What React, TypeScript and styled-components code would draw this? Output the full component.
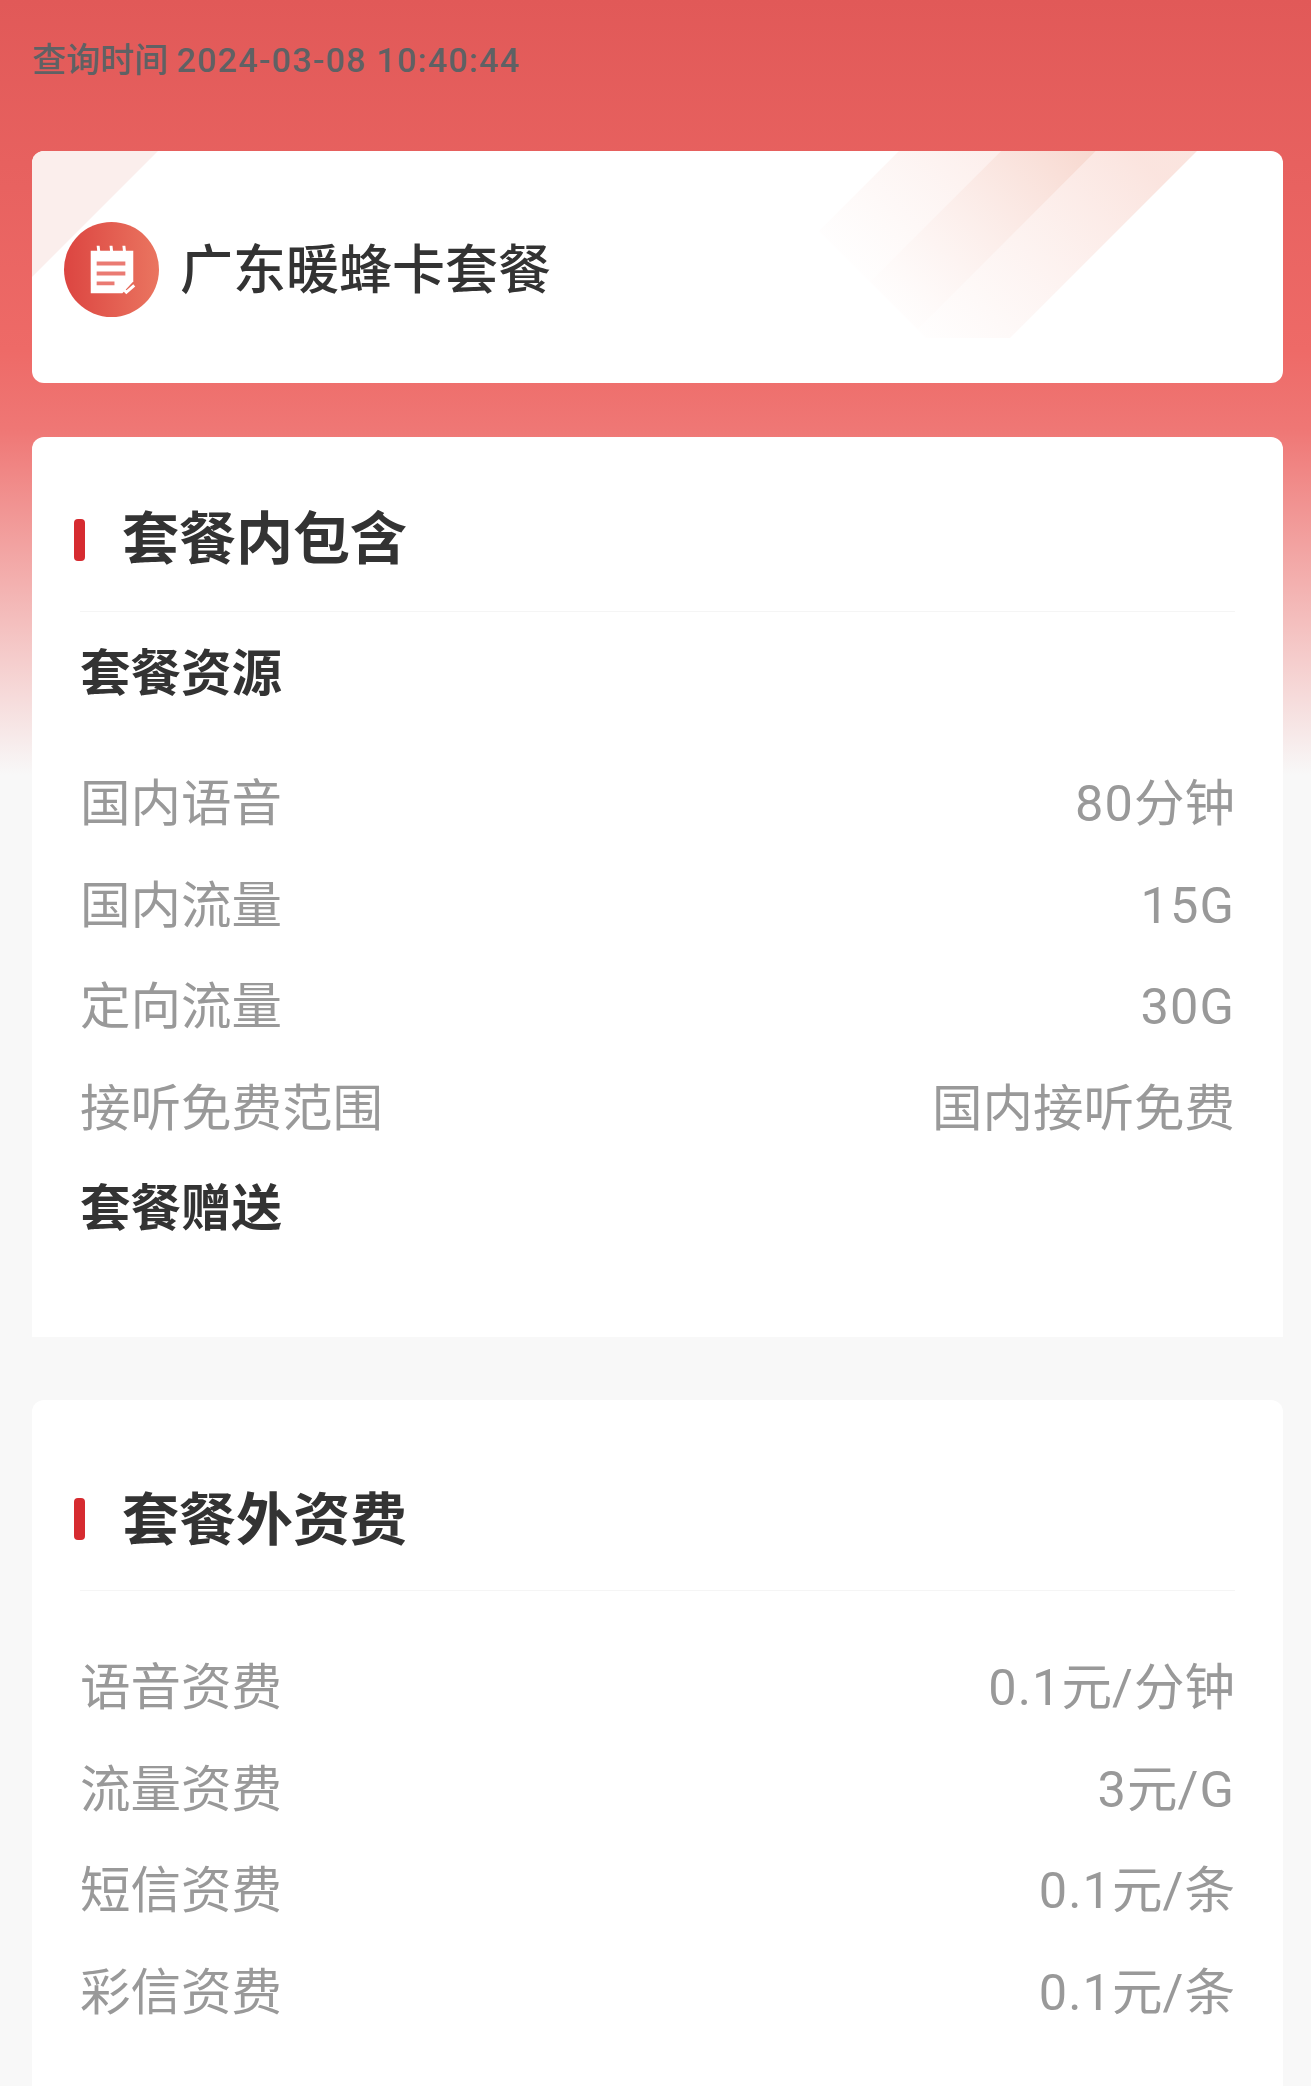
import React from "react";
import styled, { createGlobalStyle } from "styled-components";

const Global = createGlobalStyle`
  html, body { margin: 0; padding: 0; background: #f8f8f8; }
  body { font-family: Roboto, "Noto Sans CJK SC", sans-serif; }
`;

const Page = styled.div`
  width: 1311px;
  height: 2086px;
  overflow: hidden;
  box-sizing: border-box;
  padding: 0 28px 0 32px;
  display: flex;
  flex-direction: column;
  background: linear-gradient(180deg, #e15958 0, #ee6a67 350px, #ef7775 430px, #f8f8f8 775px);
`;

const QueryTime = styled.div`
  flex: none;
  height: 151px;
  padding-top: 38px;
  box-sizing: border-box;
  font-size: 34px;
  line-height: 44px;
  font-weight: 500;
  color: #5f6164;
`;

const Stamp = styled.span`
  letter-spacing: 1.25px;
`;

const Hero = styled.section`
  position: relative;
  flex: none;
  height: 232px;
  border-radius: 12px;
  background: #fff;
  overflow: hidden;
  display: flex;
  align-items: center;
  gap: 21px;
  padding-left: 32px;
  margin-bottom: 54px;
`;

const HeroArt = styled.svg`
  position: absolute;
  inset: 0;
  width: 100%;
  height: 100%;
`;

const HeroIcon = styled.svg`
  position: relative;
  width: 95px;
  height: 95px;
  flex: none;
  margin-top: 5px;
`;

const HeroTitle = styled.h1`
  position: relative;
  margin: 8px 0 0;
  font-size: 53px;
  font-weight: 500;
  color: #333;
  line-height: 72px;
`;

const Card = styled.section<{ $height?: number; $gap?: boolean }>`
  background: #fff;
  border-radius: 12px 12px 0 0;
  flex: ${(p) => (p.$height ? `0 0 ${p.$height}px` : "1 0 auto")};
  margin-bottom: ${(p) => (p.$gap ? "63px" : "0")};
  padding: 0 48px;
`;

const SectionHead = styled.div<{ $height: number; $top: number }>`
  height: ${(p) => p.$height}px;
  padding-top: ${(p) => p.$top}px;
  box-sizing: border-box;
  border-bottom: 1px solid #f5f5f5;
  display: flex;
  align-items: center;
  gap: 37px;
`;

const Marker = styled.i`
  display: block;
  width: 11px;
  height: 42px;
  border-radius: 4px;
  background: #d62b30;
  margin-left: -6px;
`;

const SectionTitle = styled.h2<{ $nudge: number }>`
  margin: ${(p) => p.$nudge}px 0 0;
  font-size: 57px;
  font-weight: 700;
  line-height: 72px;
  color: #333;
`;

const GroupTitle = styled.h3<{ $height: number; $top: number }>`
  margin: 0;
  box-sizing: border-box;
  height: ${(p) => p.$height}px;
  padding-top: ${(p) => p.$top}px;
  font-size: 50.5px;
  font-weight: 700;
  line-height: 70px;
  color: #333;
`;

const Rows = styled.div<{ $top: number }>`
  padding-top: ${(p) => p.$top}px;
`;

const Row = styled.div`
  display: flex;
  justify-content: space-between;
  height: 101.5px;
  line-height: 101.5px;
  font-size: 50.5px;
  color: #999;
`;

const Latin = styled.span`
  letter-spacing: 1.1px;
`;

const includes = [
  ["国内语音", "80分钟"],
  ["国内流量", "15G"],
  ["定向流量", "30G"],
  ["接听免费范围", "国内接听免费"],
];

const extras = [
  ["语音资费", "0.1元/分钟"],
  ["流量资费", "3元/G"],
  ["短信资费", "0.1元/条"],
  ["彩信资费", "0.1元/条"],
];

const Value = ({ text }: { text: string }) => (
  <span>
    {text.split(/([0-9A-Z./]+)/).map((part, i) =>
      i % 2 ? <Latin key={i}>{part}</Latin> : part
    )}
  </span>
);

const List = ({ items }: { items: string[][] }) => (
  <>
    {items.map(([k, v]) => (
      <Row key={k}>
        <span>{k}</span>
        <Value text={v} />
      </Row>
    ))}
  </>
);

export default function App() {
  return (
    <Page>
      <Global />
      <QueryTime>
        查询时间 <Stamp>2024-03-08 10:40:44</Stamp>
      </QueryTime>
      <Hero>
        <HeroArt viewBox="0 0 1251 232" preserveAspectRatio="none">
          <defs>
            <linearGradient id="fadeA" gradientUnits="userSpaceOnUse" x1="1040" y1="-60" x2="830" y2="150">
              <stop offset="0" stopColor="#f5bfb2" stopOpacity="0.42" />
              <stop offset="1" stopColor="#f7cfc8" stopOpacity="0" />
            </linearGradient>
            <linearGradient id="fadeB" gradientUnits="userSpaceOnUse" x1="1040" y1="-40" x2="840" y2="160">
              <stop offset="0" stopColor="#f2bdad" stopOpacity="0.62" />
              <stop offset="1" stopColor="#f7cfc8" stopOpacity="0" />
            </linearGradient>
          </defs>
          <polygon points="0,0 126,0 0,126" fill="#fbeeec" />
          <polygon points="867,0 969,0 838,131 787,80" fill="url(#fadeA)" />
          <polygon points="969,0 1064,0 885.5,178.5 838,131" fill="url(#fadeB)" />
          <polygon points="1064,0 1165,0 978,187 894,187 885.5,178.5" fill="url(#fadeA)" />
        </HeroArt>
        <HeroIcon viewBox="0 0 96 96">
          <defs>
            <linearGradient id="iconBg" x1="0" y1="0" x2="1" y2="0">
              <stop offset="0" stopColor="#dc4541" />
              <stop offset="1" stopColor="#ea7560" />
            </linearGradient>
          </defs>
          <circle cx="48" cy="48" r="48" fill="url(#iconBg)" />
          <path d="M27 29h43v31l-11 12H27z" fill="#fff" />
          <path d="M33 24h3l1 9h-3zM46 24h3l1 9h-3zM59 24h3l1 9h-3z" fill="#fff" />
          <path d="M33 40h29v4H33zM33 50h29v4H33zM33 60h18v4H33z" fill="#ea7a72" />
          <path d="M60 68l3 3 8-7" fill="none" stroke="#fff" strokeWidth="3" />
        </HeroIcon>
        <HeroTitle>广东暖蜂卡套餐</HeroTitle>
      </Hero>
      <Card $height={900} $gap>
        <SectionHead $height={175} $top={32}>
          <Marker />
          <SectionTitle $nudge={-1}>套餐内包含</SectionTitle>
        </SectionHead>
        <GroupTitle $height={141} $top={27}>套餐资源</GroupTitle>
        <List items={includes} />
        <GroupTitle $height={100} $top={15}>套餐赠送</GroupTitle>
      </Card>
      <Card>
        <SectionHead $height={191} $top={48}>
          <Marker />
          <SectionTitle $nudge={4}>套餐外资费</SectionTitle>
        </SectionHead>
        <Rows $top={46}>
          <List items={extras} />
        </Rows>
      </Card>
    </Page>
  );
}
